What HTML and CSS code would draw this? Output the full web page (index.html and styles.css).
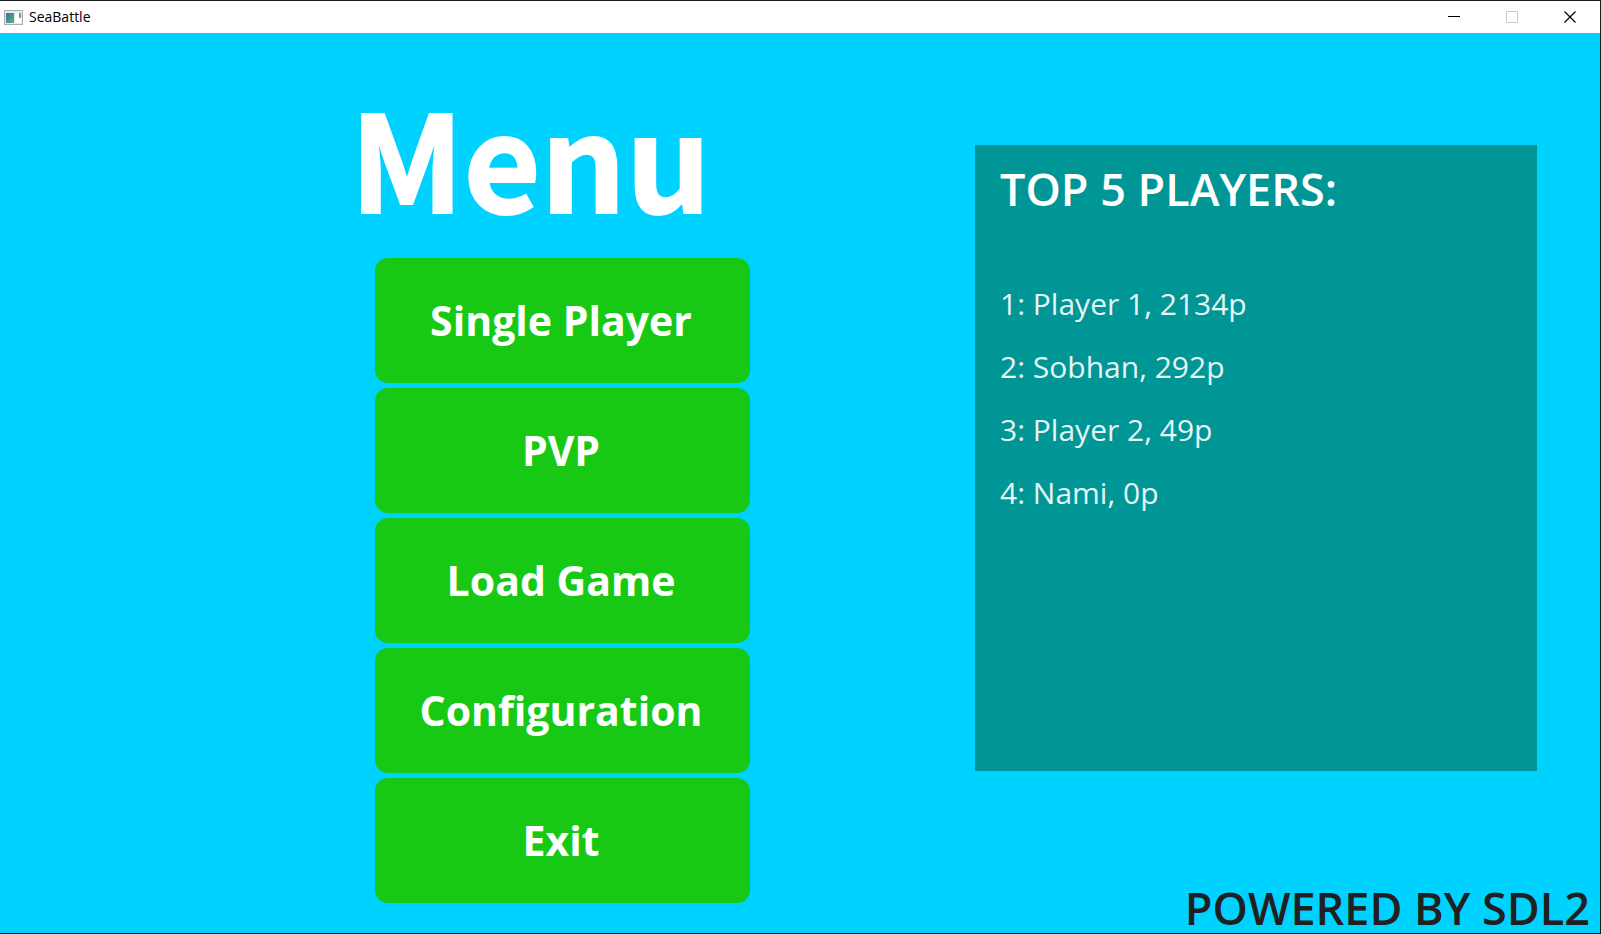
FILE: index.html
```html
<!DOCTYPE html>
<html lang="en">
<head>
<meta charset="utf-8">
<title>SeaBattle</title>
<link rel="stylesheet" href="styles.css">
</head>
<body>
<div class="window">
  <header class="titlebar">
    <svg class="app-icon" width="19" height="15" viewBox="0 0 19 15" aria-hidden="true">
      <defs><linearGradient id="pane" x1="0" y1="0" x2="1" y2="1"><stop offset="0" stop-color="#356f9e"/><stop offset="1" stop-color="#5fb878"/></linearGradient></defs>
      <rect x=".5" y=".5" width="18" height="14" fill="#e9ecef" stroke="#a9adb2"/>
      <rect x="2" y="3" width="8" height="10" fill="url(#pane)"/>
      <rect x="11" y="3" width="6" height="10" fill="#fff"/>
      <rect x="15" y="3" width="2" height="5" fill="#5aa894"/>
    </svg>
    <span class="app-name">SeaBattle</span>
    <div class="controls">
      <button class="control" aria-label="Minimize"><svg width="12" height="12"><path d="M0 5.5h12" stroke="#000"/></svg></button>
      <button class="control" aria-label="Maximize" disabled><svg width="12" height="12"><rect x=".5" y=".5" width="11" height="11" fill="none" stroke="#ccc"/></svg></button>
      <button class="control" aria-label="Close"><svg width="12" height="12"><path d="M.5 .5l11 11M11.5 .5l-11 11" stroke="#000" stroke-width="1.2"/></svg></button>
    </div>
  </header>
  <main class="stage">
    <nav class="menu">
      <h1 class="menu-title">Menu</h1>
      <div class="menu-list">
        <button class="menu-button">Single Player</button>
        <button class="menu-button">PVP</button>
        <button class="menu-button">Load Game</button>
        <button class="menu-button">Configuration</button>
        <button class="menu-button">Exit</button>
      </div>
    </nav>
    <section class="scores">
      <h2 class="scores-title">TOP 5 PLAYERS:</h2>
      <ul class="scores-list">
        <li>1: Player 1, 2134p</li>
        <li>2: Sobhan, 292p</li>
        <li>3: Player 2, 49p</li>
        <li>4: Nami, 0p</li>
      </ul>
    </section>
    <footer class="credit">POWERED BY SDL2</footer>
  </main>
</div>
</body>
</html>
```
FILE: styles.css
```css
* { box-sizing: border-box; }

body {
  margin: 0;
  font-family: "Open Sans", "Noto Sans", sans-serif;
}

.window {
  display: flex;
  flex-direction: column;
  min-height: 100vh;
  border: 1px solid #1c1c1c;
  border-left: 0;
  border-bottom-color: #08140c;
  background: #00d2ff;
}

.titlebar {
  display: flex;
  align-items: center;
  height: 32px;
  padding: 0 1px 0 4px;
  background: #fff;
}

.app-name {
  margin-left: 6px;
  font-size: 14px;
  line-height: 20px;
  color: #000;
}

.controls {
  display: flex;
  margin-left: auto;
}

.control {
  display: flex;
  align-items: center;
  justify-content: center;
  width: 58px;
  height: 32px;
  padding: 0;
  border: 0;
  background: none;
}

.stage {
  flex: 1;
  display: grid;
  grid-template-columns: 350fr 400fr 225fr 562fr 63fr;
  grid-template-rows: 112fr 625fr 162fr;
}

.menu {
  grid-column: 2;
  grid-row: 1 / 4;
  padding-top: 35px;
}

.menu-title {
  margin: 0 0 15px;
  font-family: "Noto Sans CJK SC", sans-serif;
  font-size: 133px;
  font-weight: 700;
  line-height: 175px;
  color: #fff;
  -webkit-text-stroke: 2px #fff;
}

.menu-list {
  display: grid;
  gap: 5px;
  padding-left: 25px;
}

.menu-button {
  height: 125px;
  padding: 0 3px 2px 0;
  border: 0;
  border-radius: 13px;
  background: #17c914;
  font-family: "Open Sans", "Noto Sans", sans-serif;
  font-size: 41px;
  font-weight: 700;
  color: #fff;
}

.scores {
  grid-column: 4;
  grid-row: 2;
  padding: 13px 25px;
  background: #009696;
  color: #fff;
}

.scores-title {
  margin: 0;
  font-size: 45px;
  font-weight: 600;
  line-height: 62px;
}

.scores-list {
  margin: 0;
  padding: 52px 0 0;
  list-style: none;
  font-size: 30px;
  line-height: 63px;
  color: #e6f5f5;
}

.credit {
  grid-column: 3 / 6;
  grid-row: 3;
  place-self: end;
  padding-right: 10px;
  font-size: 45px;
  font-weight: 600;
  line-height: 50px;
  color: #202020;
}
```
